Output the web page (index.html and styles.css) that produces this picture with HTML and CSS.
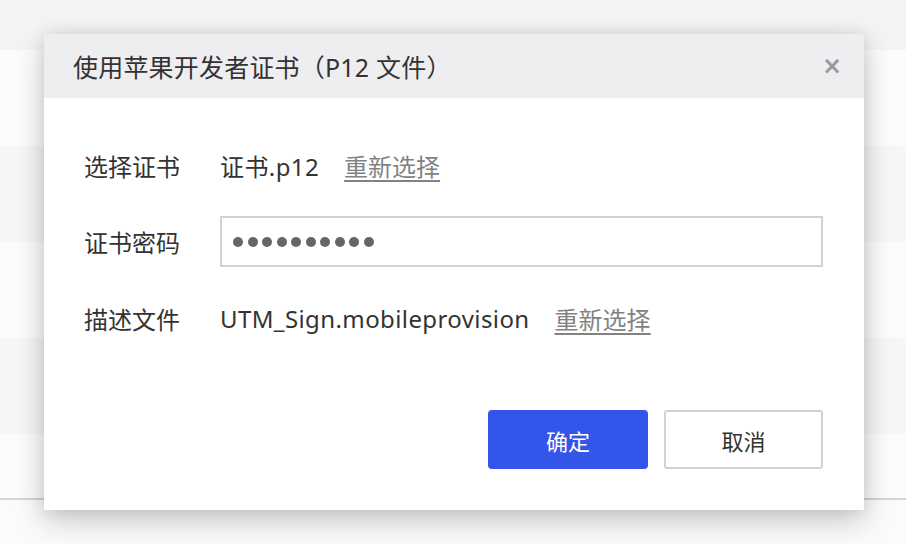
FILE: index.html
```html
<!DOCTYPE html>
<html lang="zh-CN">
<head>
<meta charset="utf-8">
<title>使用苹果开发者证书</title>
<link rel="stylesheet" href="styles.css">
</head>
<body>
<div class="page">
  <div class="table">
    <div class="trow thead"></div>
    <div class="trow"></div>
    <div class="trow alt"></div>
    <div class="trow"></div>
    <div class="trow alt"></div>
    <div class="trow last"></div>
  </div>

  <div class="dialog">
    <div class="dialog-header">
      <span class="dialog-title">使用苹果开发者证书（P12 文件）</span>
      <span class="close">×</span>
    </div>
    <div class="dialog-body">
      <div class="form-row">
        <span class="label">选择证书</span>
        <span class="value">证书.p12</span>
        <a class="link">重新选择</a>
      </div>
      <div class="form-row">
        <span class="label">证书密码</span>
        <div class="input">
          <span class="dot"></span><span class="dot"></span><span class="dot"></span><span class="dot"></span><span class="dot"></span><span class="dot"></span><span class="dot"></span><span class="dot"></span><span class="dot"></span><span class="dot"></span>
        </div>
      </div>
      <div class="form-row">
        <span class="label">描述文件</span>
        <span class="value">UTM_Sign.mobileprovision</span>
        <a class="link">重新选择</a>
      </div>
    </div>
    <div class="dialog-footer">
      <button class="btn btn-primary">确定</button>
      <button class="btn btn-default">取消</button>
    </div>
  </div>
</div>
</body>
</html>
```

FILE: styles.css
```css
* { box-sizing: border-box; }
html, body { margin: 0; padding: 0; }
body {
  width: 906px;
  height: 544px;
  overflow: hidden;
  background: #fbfbfc;
  font-family: "Noto Sans", "Noto Sans CJK SC", sans-serif;
  color: #333;
}
.page {
  position: relative;
  width: 906px;
  height: 544px;
}
.table {
  display: flex;
  flex-direction: column;
}
.trow {
  height: 96px;
  background: #fcfcfd;
}
.trow.thead {
  height: 50px;
  background: #f4f3f6;
}
.trow.alt { background: #f6f5f8; }
.trow.last {
  height: 66px;
  border-bottom: 2px solid #d3d2d6;
}

.dialog {
  position: absolute;
  left: 44px;
  top: 34px;
  width: 820px;
  background: #fff;
  box-shadow: 0 10px 28px rgba(0, 0, 0, 0.22), 0 0 14px rgba(0, 0, 0, 0.08);
}
.dialog-header {
  height: 64px;
  background: #eeedf0;
  display: flex;
  align-items: center;
  justify-content: space-between;
  padding: 0 22px 0 29px;
}
.dialog-title {
  font-size: 25px;
  color: #333;
  letter-spacing: 0.2px;
}
.close {
  font-size: 24px;
  font-weight: bold;
  color: #9a9a9a;
  font-family: "DejaVu Sans", sans-serif;
  line-height: 1;
}
.dialog-body {
  padding: 42px 41px 0 40px;
  display: flex;
  flex-direction: column;
}
.form-row {
  height: 51px;
  display: flex;
  align-items: center;
  font-size: 24px;
}
.form-row + .form-row { margin-top: 25px; }
.form-row:last-child { margin-top: 26px; }
.label {
  width: 136px;
  flex: none;
  color: #333;
}
.value {
  color: #333;
  margin-right: 25px;
  letter-spacing: 0.4px;
}
.link {
  color: #828282;
  text-decoration: underline;
  text-underline-offset: 4px;
}
.input {
  flex: 1;
  height: 51px;
  border: 2px solid #d2d2d2;
  display: flex;
  align-items: center;
  gap: 4.5px;
  padding-left: 11px;
}
.dot {
  width: 10px;
  height: 10px;
  border-radius: 50%;
  background: #666;
}
.dialog-footer {
  display: flex;
  justify-content: flex-end;
  gap: 16px;
  padding: 66px 41px 41px 0;
}
.btn {
  width: 160px;
  height: 59px;
  font-family: "Noto Sans CJK SC", sans-serif;
  font-size: 22px;
  border-radius: 4px;
  cursor: pointer;
}
.btn-primary {
  background: #3355ea;
  border: none;
  color: #fff;
}
.btn-default {
  width: 159px;
  background: #fff;
  border: 2px solid #d2d2d2;
  border-radius: 3px;
  color: #333;
}
```
